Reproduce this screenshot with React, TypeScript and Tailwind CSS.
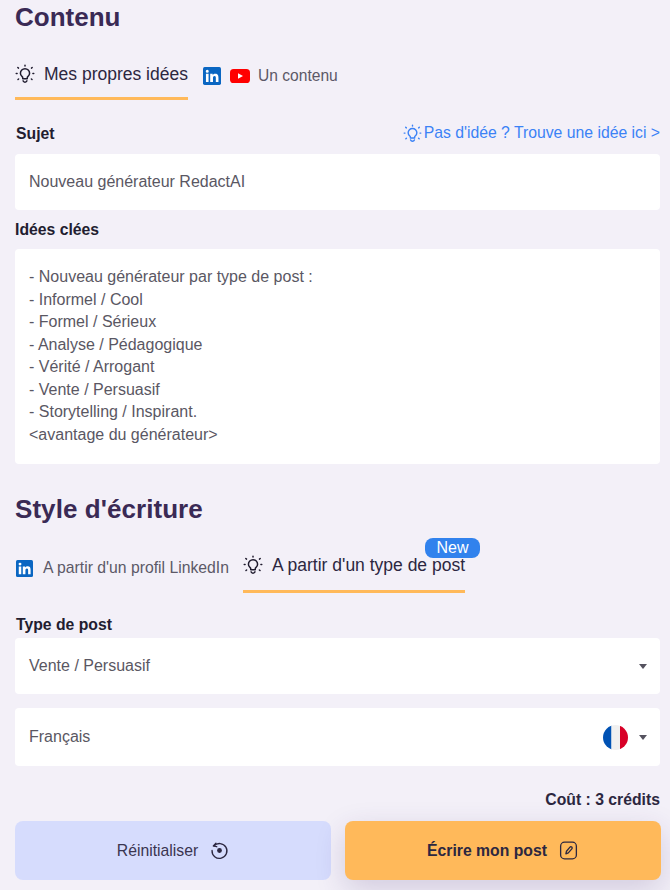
import React from "react";

const Bulb = ({ className = "", color = "#1f1b2e" }: { className?: string; color?: string }) => (
  <svg viewBox="0 0 24 24" className={className} fill="none" stroke={color} strokeWidth="1.8" strokeLinecap="round" strokeLinejoin="round">
    <path d="M8.6 15.2c-1.3-1-2.1-2.5-2.1-4.1A5.5 5.5 0 0 1 12 5.6a5.5 5.5 0 0 1 5.5 5.5c0 1.6-.8 3.1-2.1 4.1-.5.4-.7.9-.7 1.5v1H9.3v-1c0-.6-.2-1.1-.7-1.5Z" />
    <path d="M9.6 20.2c.4 1 1.3 1.6 2.4 1.6s2-.6 2.4-1.6" />
    <path d="M12 1.5v1M3.4 4.2l.8.7M20.6 4.2l-.8.7M1.5 11.5h1M21.5 11.5h1M3.6 18.6l.7-.6M20.4 18.6l-.7-.6" />
  </svg>
);

const LinkedIn = ({ className = "" }: { className?: string }) => (
  <svg viewBox="1 1 22 22" className={className}>
    <rect x="1" y="1" width="22" height="22" rx="2" fill="#0a66c2" />
    <path fill="#fff" d="M4.6 9.4h3.2v10H4.6zM6.2 4.4a1.85 1.85 0 1 1 0 3.7 1.85 1.85 0 0 1 0-3.7ZM9.8 9.4h3v1.4c.5-.9 1.6-1.7 3.2-1.7 3.3 0 3.9 2.1 3.9 4.9v5.4h-3.2v-4.8c0-1.2 0-2.7-1.6-2.7s-1.9 1.3-1.9 2.6v4.9H9.8z" />
  </svg>
);

const YouTube = ({ className = "" }: { className?: string }) => (
  <svg viewBox="0 0 20 14" className={className}>
    <rect width="20" height="14" rx="3.6" fill="#ff0000" />
    <path d="M8 4.2 13 7l-5 2.8z" fill="#fff" />
  </svg>
);

const Caret = () => (
  <span className="w-0 h-0 border-l-[4.5px] border-r-[4.5px] border-t-[5px] border-l-transparent border-r-transparent border-t-[#55525f]" />
);

const Label = ({ children }: { children: React.ReactNode }) => (
  <span className="block text-[15.75px] leading-[22px] font-bold text-[#221d30]">{children}</span>
);

const lines = [
  "- Nouveau générateur par type de post :",
  "- Informel / Cool",
  "- Formel / Sérieux",
  "- Analyse / Pédagogique",
  "- Vérité / Arrogant",
  "- Vente / Persuasif",
  "- Storytelling / Inspirant.",
  "<avantage du générateur>",
];

export default function App() {
  return (
    <div className="w-[670px] h-[890px] overflow-hidden bg-[#f3f0f8] pl-[15px] pr-[10px] text-[#5a5763]" style={{ fontFamily: '"Liberation Sans", Arial, sans-serif' }}>
      <h1 className="h-[34px] text-[26px] leading-[34px] font-bold text-[#3a2a55]">Contenu</h1>

      <div className="mt-[22px] h-[44px] flex items-start">
        <div className="h-[44px] border-b-[3px] border-[#ffb95a] flex items-start pt-[5px]">
          <Bulb className="w-[20px] h-[20px] mt-[3px]" />
          <span className="ml-[9px] text-[17.5px] leading-[26px] text-[#2c2740]">Mes propres idées</span>
        </div>
        <div className="ml-[15px] flex items-center h-[26px] mt-[7px]">
          <LinkedIn className="w-[18px] h-[18px]" />
          <YouTube className="ml-[9px] w-[20px] h-[14px]" />
          <span className="ml-[8px] text-[15.6px] text-[#5c5967]">Un contenu</span>
        </div>
      </div>

      <div className="mt-[23px] h-[20px] flex items-center justify-between">
        <span className="ml-[1px] h-[20px]"><Label>Sujet</Label></span>
        <span className="flex items-center text-[#3b82f6] text-[15.75px]">
          <Bulb className="w-[19px] h-[19px]" color="#3b82f6" />
          <span className="ml-[2px]">Pas d'idée ? Trouve une idée ici &gt;</span>
        </span>
      </div>
      <div className="mt-[11px] h-[56px] bg-white rounded-[4px] flex items-center px-[14px] text-[16px]">Nouveau générateur RedactAI</div>

      <div className="mt-[9px] h-[20px]"><Label>Idées clées</Label></div>
      <div className="mt-[10px] h-[215px] bg-white rounded-[4px] px-[14px] pt-[17px] text-[16px] leading-[22.5px]">
        {lines.map((l) => (
          <div key={l}>{l}</div>
        ))}
      </div>

      <h2 className="mt-[28px] h-[34px] text-[26px] leading-[34px] font-bold text-[#3a2a55] tracking-[0.06px]">Style d'écriture</h2>

      <div className="mt-[13px] h-[54px] flex items-start">
        <div className="ml-[1px] mt-[16px] flex items-center h-[26px]">
          <LinkedIn className="w-[17px] h-[17px]" />
          <span className="ml-[10px] text-[15.75px] text-[#5c5967]">A partir d'un profil LinkedIn</span>
        </div>
        <div className="relative ml-[14px] h-[54px] border-b-[3px] border-[#ffb95a] flex items-start pt-[13px]">
          <Bulb className="w-[20px] h-[20px] mt-[3px]" />
          <span className="ml-[9px] text-[17.5px] leading-[26px] text-[#2c2740]">A partir d'un type de post</span>
          <span className="absolute -top-[1px] -right-[15px] w-[55px] h-[20px] rounded-[8px] bg-[#3182ed] text-white text-[16px] leading-[19px] text-center">New</span>
        </div>
      </div>

      <div className="mt-[21px] h-[20px] ml-[1px]"><Label>Type de post</Label></div>
      <div className="mt-[4px] h-[56px] bg-white rounded-[4px] flex items-center justify-between pl-[14px] pr-[13px] text-[16px]">
        <span>Vente / Persuasif</span>
        <Caret />
      </div>
      <div className="mt-[14px] h-[58px] bg-white rounded-[4px] flex items-center justify-between pl-[14px] pr-[13px] text-[16px]">
        <span>Français</span>
        <span className="flex items-center">
          <svg viewBox="0 0 25 25" className="w-[25px] h-[25px]">
            <defs>
              <clipPath id="flag-circle"><circle cx="12.5" cy="12.5" r="12.5" /></clipPath>
            </defs>
            <g clipPath="url(#flag-circle)">
              <rect width="8.5" height="25" fill="#0052b4" />
              <rect x="8.5" width="8.5" height="25" fill="#f0f0f0" />
              <rect x="17" width="8" height="25" fill="#d80027" />
            </g>
          </svg>
          <span className="ml-[11px] flex"><Caret /></span>
        </span>
      </div>

      <div className="mt-[24px] h-[20px] text-right text-[15.75px] leading-[20px] font-bold text-[#2c2740]">Coût : 3 crédits</div>
      <div className="mt-[11px] flex gap-[14px] w-[646px]">
        <button className="w-[316px] h-[59px] rounded-[8px] bg-[#d6dcfd] flex items-center justify-center text-[15.75px] text-[#3a3550]">
          <span>Réinitialiser</span>
          <svg viewBox="0 0 24 24" className="ml-[12px] w-[19px] h-[19px]" fill="none" stroke="#2c2740" strokeWidth="1.7" strokeLinecap="round" strokeLinejoin="round">
            <path d="M7.5 2.8 4.2 6.2l4.3 1" />
            <path d="M5 6.3A9.4 9.4 0 1 1 2.6 12" />
            <circle cx="12" cy="12" r="2.2" fill="#2c2740" />
          </svg>
        </button>
        <button className="w-[316px] h-[59px] rounded-[8px] bg-[#ffb95a] shadow-[0_10px_30px_rgba(60,40,110,0.18)] flex items-center justify-center text-[15.75px] font-bold text-[#2c2740]">
          <span>Écrire mon post</span>
          <svg viewBox="0 0 24 24" className="ml-[11px] w-[21px] h-[21px]" fill="none" stroke="#2c2740" strokeWidth="1.5" strokeLinecap="round" strokeLinejoin="round">
            <rect x="3" y="2.5" width="18" height="19" rx="4.5" />
            <path d="m9 15.8.7-3 4-4.6a1.4 1.4 0 0 1 2.1 1.9l-4 4.6z" />
          </svg>
        </button>
      </div>
    </div>
  );
}
